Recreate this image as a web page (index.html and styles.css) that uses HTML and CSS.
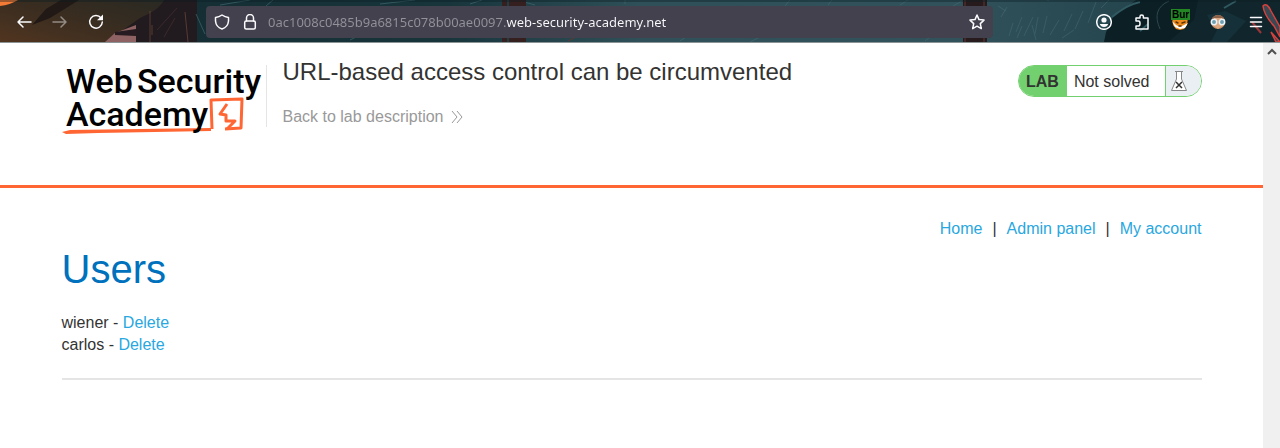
FILE: index.html
```html
<!DOCTYPE html>
<html lang="en">
<head>
<meta charset="utf-8">
<meta name="viewport" content="width=device-width, initial-scale=1">
<title>URL-based access control can be circumvented</title>
<link rel="stylesheet" href="styles.css">
</head>
<body>
<div class="toolbar">
  <svg class="theme" viewBox="0 0 1280 42" preserveAspectRatio="none" aria-hidden="true">
    <defs>
      <linearGradient id="sea" x1="0" x2="1" y1="0" y2="0">
        <stop offset="0" stop-color="#13292f"/><stop offset=".35" stop-color="#18353c"/><stop offset=".5" stop-color="#2f5058"/><stop offset=".75" stop-color="#31525b"/><stop offset="1" stop-color="#1c3b43"/>
      </linearGradient>
      <linearGradient id="earth" x1="0" x2="1" y1="1" y2="0">
        <stop offset="0" stop-color="#513520"/><stop offset=".5" stop-color="#3a2d20"/><stop offset="1" stop-color="#292923"/>
      </linearGradient>
    </defs>
    <path fill="url(#sea)" d="M0 0h1280v42H0z"/>
    <path fill="#211a1e" d="M100 0h97v42h-97z"/>
    <path fill="url(#earth)" d="M0 0h164c-4 8-13 13-24 18l-34 24H0z"/>
    <path fill="#f47b35" d="M0 0h18Q10 5 0 6z"/>
    <path fill="#211915" d="M61 0h18L50 18 32 25l14-16z"/>
    <path fill="#8e6262" d="M115 33l21-8v17h-31z"/>
    <path fill="#261b20" d="M115 32l21-3v7l-21-1z"/>
    <path stroke="#704a3e" fill="none" opacity=".7" d="M150 11v31M152 25v10M185 12l3 30"/>
    <path stroke="#3a2a2c" fill="none" d="M157 30l20-22M164 37l11-19"/>
    <path stroke="#3f6870" fill="none" opacity=".7" d="M196 14l9 20M220 5l30-5M266 6l7-6M350 40l10-5M380 4l35-4M470 4l12-4M535 5l-18-5M625 4v-4M680 41l6-4M750 42l10-5M785 6l5-6M828 5l4-5M900 5l8-5M953 6l9-5M925 41l5-4"/>
    <path fill="#36201f" d="M502 0h5v42h-5zm7 0h17v42h-17z"/>
    <path fill="#271b1d" d="M963 0h24v42h-24z"/>
    <path stroke="#5e3833" fill="none" d="M965 0v42m19-42v42M568 41l8-4"/>
    <path stroke="#487079" fill="none" opacity=".45" d="M998 6l8 5m-5 6l6-10m2 29l4-13m3 9l6-15m2 19l9-19m2 17l3-17m5 16l4-17m3 19l9-15m5 11l8-17m3 15l8-18m5 12l8-21m5 6l9-9m-61 2l-12-6m32 4l7-4M1017 38l5-12m14 14l-4-15m30 13l12-8"/>
    <path fill="#11262c" d="M1136 0h144v42h-158c-3-18-3-30 14-42z"/>
    <path fill="#0b1f24" d="M1118 11l22-11h58l-4 20-26 22h-64q3-20 14-31z"/>
    <path stroke="#315962" stroke-width="2" fill="none" d="M1112 17q14-12 28-15M1140 31l8-7M1224 8l12-7"/>
    <path fill="#163039" d="M1207 15q5 12 13 9l-9 18h16l19-21-21-10z"/>
    <path stroke="#2c474f" fill="none" d="M1160 29q-9-20 9-28"/>
    <path fill="#394852" stroke="#d6413e" stroke-width="1.500" d="M1263 6q4-4 8 5l9 16v10l-6-11q-10-11-11-20zM1271 32l9 10h-4z"/>
    <path stroke="#9c3537" stroke-width="2" d="M1252 22l9 11"/>
    <path stroke="#0b1d22" opacity=".75" d="M0 1h1280"/>
  </svg>

  <div class="tools">
    <button class="tool" aria-label="Back"><svg viewBox="0 0 16 16"><path d="M15 8H2M7 3 2 8l5 5"/></svg></button>
    <button class="tool muted" aria-label="Forward"><svg viewBox="0 0 16 16"><path d="M1 8h13M9 3l5 5-5 5"/></svg></button>
    <button class="tool" aria-label="Reload"><svg viewBox="0 0 16 16"><path d="M13 4a6.300 6.300 0 1 0 1.300 4"/><path class="solid" d="M15 .5v5.800H9z"/></svg></button>
  </div>

  <div class="address">
    <svg class="glyph" viewBox="0 0 16 16" aria-hidden="true"><path d="M8 1q3 2 6.500 2.500V7q-.5 6-6.500 8-6-2-6.500-8V3.500Q5 3 8 1z"/></svg>
    <svg class="glyph" viewBox="0 0 16 16" aria-hidden="true"><path d="M4.500 7V4a3.500 3.500 0 0 1 7 0v3"/><rect x="2.700" y="7" width="10.600" height="8" rx="1.500"/></svg>
    <input class="url" type="text" aria-label="Address" spellcheck="false" value="0ac1008c0485b9a6815c078b00ae0097.web-security-academy.net">
    <button class="tool star" aria-label="Bookmark this page"><svg viewBox="0 0 16 16"><path d="m8 1 2 4.600 5 .5-3.700 3.500 1 5L8 12.200l-4.300 2.400 1-5L1 6.100l5-.5z"/></svg></button>
  </div>

  <div class="extras">
    <button class="tool" aria-label="Account"><svg viewBox="0 0 16 16"><circle cx="8" cy="8" r="7.300"/><circle class="solid" cx="8" cy="6" r="2.600"/><path class="solid" d="M3.800 10h8.400q-1 3-4.200 3t-4.200-3z"/></svg></button>
    <button class="tool" aria-label="Extensions"><svg viewBox="0 0 16 16"><path d="M2 7V4h4V2.500q0-1.500 1.700-1.500t1.700 1.500V4H14v11H2v-3h2.500Q6 12 6 9.500T4.500 7z"/></svg></button>
    <button class="tool proxy" aria-label="FoxyProxy">
      <svg viewBox="0 0 16 16"><path fill="#ef8b1d" stroke="none" d="M0 3h16l-1 8-3 4-4 1-4-1-3-4z"/><path fill="#fff" stroke="none" d="m0 7 4 4 4 2 4-2 4-2-3 5-5 1-5-2z"/><path stroke="#5b3510" d="M4 8l2 1m4 0l3-1M7 12h2"/></svg>
      <span class="badge">Bur</span>
    </button>
    <button class="tool" aria-label="Profile switcher"><svg viewBox="0 0 16 16"><circle cx="8" cy="8" r="7" fill="#c48e66" stroke="none"/><path fill="#8b6248" stroke="none" d="M2 4q6-6 12 0v2H2z"/><path fill="#dda77f" stroke="none" d="M4 4h8v8l-4 3-4-3z"/><circle cx="4" cy="8" r="2.700" fill="#6c9fb2" stroke="#edf3f5"/><circle cx="12" cy="8" r="2.700" fill="#6c9fb2" stroke="#edf3f5"/></svg></button>
    <button class="tool" aria-label="Open menu"><svg viewBox="0 0 16 16"><path d="M2.500 3.500h11M2.500 8h11M2.500 12.500h11"/></svg></button>
  </div>
</div>

<div class="viewport">
  <div class="page">
    <header class="lab-header">
      <div class="container header-row">
        <a class="logo" href="#" aria-label="Web Security Academy">
          <svg viewBox="0 0 204 76">
            <text x="4" y="32">Web</text><text x="75" y="32">Security</text>
            <path fill="#ff6633" d="m0 71 8-2 141-2v3L36 72l-32 1z"/>
            <path class="mark" d="M150 68l-1-29 31-1-1 29-16 1"/>
            <path class="mark" d="M165 43l-7 10 6 1 0 6 9 0-8 8"/>
            <text x="4" y="65">Academy</text>
          </svg>
        </a>
        <div class="title">
          <h2>URL-based access control can be circumvented</h2>
          <a class="back" href="#">Back to lab description <svg viewBox="0 0 12 14" aria-hidden="true"><path d="m1 1 5 6-5 6M6 1l5 6-5 6"/></svg></a>
        </div>
        <div class="status">
          <span class="lab">LAB</span>
          <span class="state">Not solved</span>
          <span class="flask"><svg viewBox="0 0 16 20" aria-hidden="true"><path fill="#fff" stroke="#888" d="M4 .5h8M5.500 1v7L.500 19.500h15L10.500 8V1"/><path stroke="#333" stroke-width="1.500" d="m5 11 6 6m0-6-6 6"/></svg></span>
        </div>
      </div>
    </header>
    <main class="container">
      <nav class="links"><a href="#">Home</a><span>|</span><a href="#">Admin panel</a><span>|</span><a href="#">My account</a></nav>
      <h1>Users</h1>
      <div class="user">wiener - <a href="#">Delete</a></div>
      <div class="user">carlos - <a href="#">Delete</a></div>
      <hr>
    </main>
  </div>
  <div class="scrollbar"><button aria-label="Scroll up"><svg viewBox="0 0 10 7"><path d="m1 6 4-4 4 4"/></svg></button></div>
</div>
</body>
</html>
```
FILE: styles.css
```css
* { box-sizing: border-box; }
body {
  margin: 0;
  min-height: 100vh;
  display: flex;
  flex-direction: column;
  background: #fff;
  color: #333332;
  font: 16px/22px "Liberation Sans", Arial, sans-serif;
}
a { color: #29a7df; text-decoration: none; }
h1, h2 { margin: 0; font-weight: 400; }
button { border: 0; padding: 0; background: none; color: inherit; font: inherit; }
svg { display: block; }

.toolbar {
  position: relative;
  display: flex;
  align-items: center;
  height: 43px;
  padding: 2px 16px 0;
  border-bottom: 1px solid #8c9496;
  color: #fbfbfe;
}
.theme { position: absolute; inset: 0; width: 100%; height: 100%; }
.tools, .address, .extras { position: relative; display: flex; align-items: center; }
.tools { gap: 20px; width: 190px; }
.tool { position: relative; width: 16px; height: 16px; }
.tool svg, .glyph { width: 16px; height: 16px; fill: none; stroke: currentColor; stroke-width: 1.5; stroke-linejoin: round; stroke-linecap: round; }
.tool .solid { fill: currentColor; stroke: none; }
.muted { opacity: .45; }
.address { flex: 1; height: 32px; gap: 12px; padding: 0 8px; border-radius: 4px; background: #42414d; }
.url {
  flex: 1;
  min-width: 0;
  height: 32px;
  padding: 0;
  margin-left: -2px;
  border: 0;
  outline: 0;
  font: 13px "Noto Sans", sans-serif;
  color: transparent;
  background: linear-gradient(90deg, #93929a 238px, #fbfbfe 238px);
  -webkit-background-clip: text;
  background-clip: text;
  caret-color: #fbfbfe;
}
.extras { gap: 22px; width: 271px; justify-content: flex-end; }
.badge { position: absolute; top: -5px; left: -1px; height: 11px; padding: 0 1px; background: #238823; color: #000; font: bold 10px/11px "Liberation Sans", sans-serif; }

.viewport { flex: 1; display: flex; }
.page { flex: 1; min-width: 0; }
.scrollbar { width: 17px; background: #f0f0f0; }
.scrollbar button { display: grid; place-items: center; width: 17px; height: 16px; }
.scrollbar svg { width: 10px; height: 7px; fill: none; stroke: #505050; stroke-width: 2; }

.container { width: calc(100% - 123px); max-width: 1140px; margin: 0 auto; }
.lab-header { height: 145px; padding-top: 18px; border-bottom: 3px solid #ff6633; }
.header-row { display: flex; align-items: flex-start; }
.logo { display: block; width: 205px; margin-top: 4px; border-right: 1px solid #e5e5e5; height: 62px; }
.logo svg { width: 204px; height: 76px; margin-top: -4px; overflow: visible; }
.logo text { font: 500 34px Roboto, sans-serif; fill: #000; }
.mark { fill: none; stroke: #ff6633; stroke-width: 3; stroke-linejoin: round; }
.title { flex: 1; padding-left: 16px; }
.title h2 { font-size: 24px; line-height: 22px; }
.back { display: flex; align-items: center; gap: 8px; margin-top: 23px; color: #999; }
.back svg { width: 12px; height: 14px; fill: none; stroke: #999; }

.status { display: flex; height: 32px; margin-top: 4px; border: 1px solid #72d06f; border-radius: 16px; overflow: hidden; line-height: 31px; }
.lab { padding: 0 8px 0 7px; background: #72d06f; font-weight: bold; }
.state { padding: 0 15px 0 7px; }
.flask { width: 36px; padding: 5px; border-left: 1px solid #72d06f; background: #eaeff3; }
.flask svg { width: 16px; height: 20px; fill: none; }

.links { display: flex; justify-content: flex-end; gap: 10px; padding-top: 30px; }
h1 { margin: 7px 0 21px; color: #0071bc; font-size: 40px; line-height: 44px; }
hr { height: 2px; margin: 22px 0 0; border: 0; background: #e5e5e5; }
```
